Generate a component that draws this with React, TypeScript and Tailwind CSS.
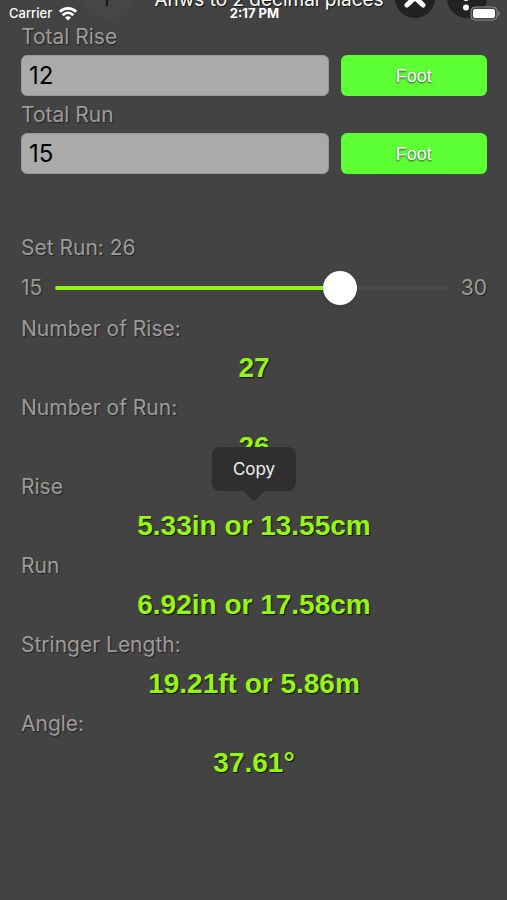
import { useState } from 'react';
import type { ReactNode } from 'react';

type Unit = 'Foot' | 'Inch' | 'Meter';

const RUN_MIN = 15;
const RUN_MAX = 30;

const WifiIcon = () => (
  <svg className="w-5 h-4" viewBox="0 0 20 16" fill="none" stroke="white" strokeWidth="2.8">
    <path d="M1.8 5.8C6.2 1.2 13.8 1.2 18.2 5.8" />
    <path d="M4.7 9.2C7.8 6.2 12.2 6.2 15.3 9.2" />
    <path d="M10 14.5L7 11.4C8.7 9.8 11.3 9.8 13 11.4Z" fill="white" stroke="none" />
  </svg>
);

const BatteryIcon = () => (
  <svg className="w-[30px] h-4" viewBox="0 0 30 16" fill="none">
    <rect x="1" y="1" width="26" height="13" rx="4" fill="#434343" stroke="#8c8c8c" />
    <rect x="3" y="3" width="22" height="9" rx="2" fill="white" />
    <path d="M28.2 5C30 5.5 30 9.5 28.2 10Z" fill="#8c8c8c" />
  </svg>
);

const StatusBar = () => (
  <div className="absolute inset-x-0 top-0 h-7 pl-[9px] pr-[7px] grid grid-cols-3 items-center text-[13px] text-white pointer-events-none">
    <div className="flex items-center gap-[6px]">
      <span className="font-medium">{'Carrier'}</span>
      <WifiIcon />
    </div>
    <span className="text-center font-bold whitespace-nowrap">{'2:17 PM'}</span>
    <div className="flex justify-end">
      <BatteryIcon />
    </div>
  </div>
);

const Header = () => (
  <header className="h-[18px] pl-[81px] pr-5 flex items-end overflow-hidden">
    <button
      type="button"
      aria-label="Add"
      className="w-[54px] h-10 shrink-0 rounded-full bg-[#464646] flex items-center justify-center"
    >
      <svg className="size-10" viewBox="0 0 40 40" stroke="#1c1c1c" strokeWidth="2.5">
        <path d="M19 12V28M11 20H27" />
      </svg>
    </button>
    <p className="grow pl-2 pb-[6px] text-center text-[19px] leading-6 text-white whitespace-nowrap [text-shadow:1px_1px_1px_#111]">
      {'Anws to 2 decimal places'}
    </p>
    <div className="flex gap-3 shrink-0">
      <button type="button" aria-label="Close" className="size-10 rounded-full bg-[#222] flex items-center justify-center">
        <svg className="size-10" viewBox="0 0 40 40" stroke="white" strokeWidth="5" strokeLinecap="round">
          <path d="M12 12L28 27M28 12L12 27" />
        </svg>
      </button>
      <button type="button" aria-label="Menu" className="size-10 rounded-full bg-[#222] flex items-center justify-center">
        <svg className="size-10" viewBox="0 0 40 40" fill="white">
          <circle cx="19" cy="11" r="3" />
          <circle cx="19" cy="20" r="3" />
          <circle cx="19" cy="29.5" r="3" />
        </svg>
      </button>
    </div>
  </header>
);

interface MeasureFieldProps {
  id: string;
  label: string;
  value: string;
  onChange: (value: string) => void;
}

const MeasureField = ({ id, label, value, onChange }: MeasureFieldProps) => {
  const [unit, setUnit] = useState<Unit>('Foot');

  const handleUnit = () => {
    setUnit((prev) => (prev === 'Foot' ? 'Inch' : prev === 'Inch' ? 'Meter' : 'Foot'));
  };

  return (
    <div>
      <label htmlFor={id} className="block leading-[37px]">
        {label}
      </label>
      <div className="grid grid-cols-[21fr_10fr] gap-3">
        <input
          id={id}
          inputMode="decimal"
          value={value}
          onChange={(e) => onChange(e.target.value)}
          className="min-w-0 h-[41px] px-[7px] rounded-md border border-[#989898] bg-[#aaa] font-normal text-2xl text-black outline-none"
        />
        <button
          type="button"
          onClick={handleUnit}
          className="h-[41px] rounded-md bg-[#5cff33] font-['Liberation_Sans',sans-serif] text-lg text-white [text-shadow:0_1px_2px_#333]"
        >
          {unit}
        </button>
      </div>
    </div>
  );
};

interface ResultProps {
  label: string;
  value: string;
  children?: ReactNode;
}

const Result = ({ label, value, children }: ResultProps) => (
  <div>
    <dt className="leading-[39px]">{label}</dt>
    <dd className="relative text-center font-['Liberation_Sans',sans-serif] font-bold text-[28px] leading-10 text-[#96f514] [text-shadow:1px_1px_1px_#111]">
      {value}
      {children}
    </dd>
  </div>
);

const CopyBubble = () => (
  <button
    type="button"
    className="absolute z-10 bottom-full left-1/2 -translate-x-1/2 mb-[15px] h-11 px-[21px] rounded-lg bg-[#2f2f2f] font-['Inter',sans-serif] font-normal text-[17px] leading-6 text-[#f0f0f0] [text-shadow:none]"
  >
    {'Copy'}
    <svg className="absolute top-full left-1/2 -translate-x-1/2 w-[22px] h-[10px]" viewBox="0 0 22 10" fill="#2f2f2f">
      <path d="M0 0H22L12 9.4Q11 10.2 10 9.4Z" />
    </svg>
  </button>
);

const App = () => {
  const [rise, setRise] = useState('12');
  const [run, setRun] = useState('15');
  const [steps, setSteps] = useState(26.2);

  const percent = ((steps - RUN_MIN) / (RUN_MAX - RUN_MIN)) * 100;

  return (
    <div className="relative min-h-screen bg-[#434343] font-['Inter',sans-serif] text-[#9c9c9c]">
      <Header />
      <StatusBar />
      <main className="pl-[21px] pr-5 text-[21px] font-normal [text-shadow:1px_1px_1px_#222]">
        <MeasureField id="rise" label="Total Rise" value={rise} onChange={setRise} />
        <MeasureField id="run" label="Total Run" value={run} onChange={setRun} />

        <label htmlFor="steps" className="block mt-[54px] leading-10">
          {`Set Run: ${Math.round(steps)}`}
        </label>
        <div className="h-10 mb-px flex items-center gap-[13px]">
          <span>{RUN_MIN}</span>
          <input
            id="steps"
            type="range"
            min={RUN_MIN}
            max={RUN_MAX}
            step={0.1}
            value={steps}
            onChange={(e) => setSteps(Number(e.target.value))}
            style={{ backgroundImage: `linear-gradient(to right, #96f514 ${percent}%, #4b4b4b ${percent}%)` }}
            className="min-w-0 grow h-1 appearance-none rounded-xs outline-none [&::-webkit-slider-thumb]:appearance-none [&::-webkit-slider-thumb]:size-[34px] [&::-webkit-slider-thumb]:rounded-full [&::-webkit-slider-thumb]:bg-white [&::-webkit-slider-thumb]:shadow-md"
          />
          <span>{RUN_MAX}</span>
        </div>

        <dl>
          <Result label="Number of Rise:" value="27" />
          <Result label="Number of Run:" value="26" />
          <Result label="Rise" value="5.33in or 13.55cm">
            <CopyBubble />
          </Result>
          <Result label="Run" value="6.92in or 17.58cm" />
          <Result label="Stringer Length:" value="19.21ft or 5.86m" />
          <Result label="Angle:" value="37.61°" />
        </dl>
      </main>
    </div>
  );
};

export default App;
